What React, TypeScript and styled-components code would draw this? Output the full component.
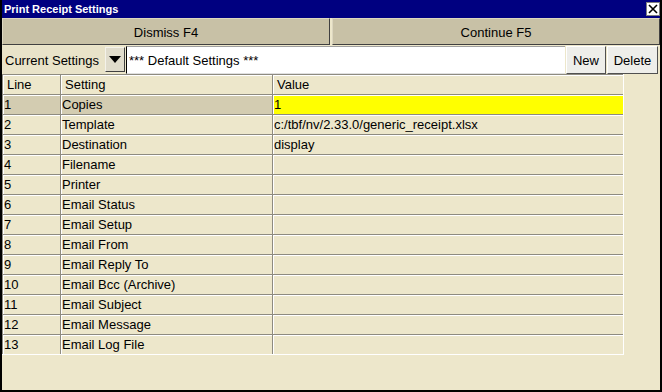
import styled, { createGlobalStyle } from 'styled-components';

const GlobalStyle = createGlobalStyle`
  html, body {
    margin: 0;
    padding: 0;
    background: #fff;
  }
  * {
    box-sizing: border-box;
  }
`;

const rows = [
  { line: 1, setting: 'Copies', value: '1' },
  { line: 2, setting: 'Template', value: 'c:/tbf/nv/2.33.0/generic_receipt.xlsx' },
  { line: 3, setting: 'Destination', value: 'display' },
  { line: 4, setting: 'Filename', value: '' },
  { line: 5, setting: 'Printer', value: '' },
  { line: 6, setting: 'Email Status', value: '' },
  { line: 7, setting: 'Email Setup', value: '' },
  { line: 8, setting: 'Email From', value: '' },
  { line: 9, setting: 'Email Reply To', value: '' },
  { line: 10, setting: 'Email Bcc (Archive)', value: '' },
  { line: 11, setting: 'Email Subject', value: '' },
  { line: 12, setting: 'Email Message', value: '' },
  { line: 13, setting: 'Email Log File', value: '' },
];

export default function App() {
  return (
    <>
      <GlobalStyle />
      <Window>
        <TitleBar>
          <span>Print Receipt Settings</span>
          <CloseButton>
            <svg width="10" height="10" viewBox="0 0 10 10">
              <path d="M1 1 L9 9 M9 1 L1 9" stroke="#000" strokeWidth="1.6" />
            </svg>
          </CloseButton>
        </TitleBar>
        <ActionRow>
          <ActionButton>Dismiss F4</ActionButton>
          <ActionButton>Continue F5</ActionButton>
        </ActionRow>
        <SettingsRow>
          <SettingsLabel>Current Settings</SettingsLabel>
          <DropButton>
            <Triangle />
          </DropButton>
          <SettingsInput>*** Default Settings ***</SettingsInput>
          <SmallButton $w={40}>New</SmallButton>
          <SmallButton $w={51}>Delete</SmallButton>
        </SettingsRow>
        <GridArea>
          <Grid>
            <HeadCell>Line</HeadCell>
            <HeadCell>Setting</HeadCell>
            <HeadCell>Value</HeadCell>
            {rows.map((r) => (
              <Row key={r.line}>
                <Cell $active={r.line === 1}>{r.line}</Cell>
                <Cell $active={r.line === 1}>{r.setting}</Cell>
                <Cell $editing={r.line === 1}>{r.value}</Cell>
              </Row>
            ))}
          </Grid>
        </GridArea>
      </Window>
    </>
  );
}

const Window = styled.div`
  width: 662px;
  height: 392px;
  border: 2px solid #000;
  border-top: 0;
  background: #ede7cb;
  display: flex;
  flex-direction: column;
  font-family: 'Liberation Sans', Arial, sans-serif;
  font-size: 13px;
  color: #000;
`;

const TitleBar = styled.div`
  height: 18px;
  background: #000080;
  color: #fff;
  font-weight: bold;
  font-size: 11px;
  display: flex;
  align-items: center;
  justify-content: space-between;
  padding: 0 0 1px 2px;
`;

const CloseButton = styled.div`
  width: 14px;
  height: 14px;
  background: #fff;
  border: 1px solid #808080;
  display: flex;
  align-items: center;
  justify-content: center;
  margin-top: 1px;
`;

const ActionRow = styled.div`
  display: grid;
  grid-template-columns: 1fr 1fr;
  gap: 2px;
  height: 27px;
`;

const ActionButton = styled.div`
  background: #c8c1a6;
  border-top: 1px solid #ddd7c0;
  border-left: 1px solid #ddd7c0;
  border-right: 1px solid #404040;
  border-bottom: 1px solid #404040;
  display: flex;
  align-items: center;
  justify-content: center;
  padding-top: 1px;
`;

const SettingsRow = styled.div`
  display: flex;
  align-items: stretch;
  height: 28px;
  margin-top: 1px;
  padding-right: 2px;
`;

const SettingsLabel = styled.div`
  width: 103px;
  background: #e9e3c9;
  display: flex;
  align-items: center;
  padding-left: 3px;
  padding-top: 1px;
`;

const DropButton = styled.div`
  width: 20px;
  height: 25px;
  margin-top: 1px;
  margin-right: 1px;
  background: #e0dccc;
  border-top: 1px solid #f4f2ea;
  border-left: 1px solid #f4f2ea;
  border-right: 1px solid #404040;
  border-bottom: 1px solid #404040;
  display: flex;
  align-items: center;
  justify-content: center;
`;

const Triangle = styled.div`
  width: 0;
  height: 0;
  border-left: 6px solid transparent;
  border-right: 6px solid transparent;
  border-top: 7px solid #000;
`;

const SettingsInput = styled.div`
  flex: 1;
  background: #fff;
  border-left: 1px solid #000;
  border-top: 1px solid #a0a0a0;
  border-bottom: 1px solid #e0e0e0;
  display: flex;
  align-items: center;
  padding-left: 2px;
  padding-top: 1px;
`;

const SmallButton = styled.div<{ $w: number }>`
  width: ${(p) => p.$w}px;
  margin-left: 1px;
  background: #eeeeea;
  border-top: 1px solid #fff;
  border-left: 1px solid #fff;
  border-right: 1px solid #505050;
  border-bottom: 1px solid #505050;
  display: flex;
  align-items: center;
  justify-content: center;
  padding-top: 1px;
`;

const GridArea = styled.div`
  flex: 1;
  display: flex;
  align-items: flex-start;
`;

const Grid = styled.div`
  display: grid;
  grid-template-columns: 58px 212px 351px;
  border-right: 1px solid #fff;
  border-bottom: 1px solid #fff;
`;

const Row = styled.div`
  display: contents;
`;

const Cell = styled.div<{ $active?: boolean; $editing?: boolean }>`
  height: 20px;
  border-top: 1px solid #8e8b80;
  border-left: 1px solid #8e8b80;
  box-shadow: inset 1px 1px 0 #fff;
  background: ${(p) => (p.$editing ? '#ffff00' : p.$active ? '#d3ccb1' : 'transparent')};
  padding: 2px 0 0 1px;
  white-space: nowrap;
  overflow: hidden;
  line-height: 16px;
`;

const HeadCell = styled(Cell)`
  padding-left: 4px;
`;
